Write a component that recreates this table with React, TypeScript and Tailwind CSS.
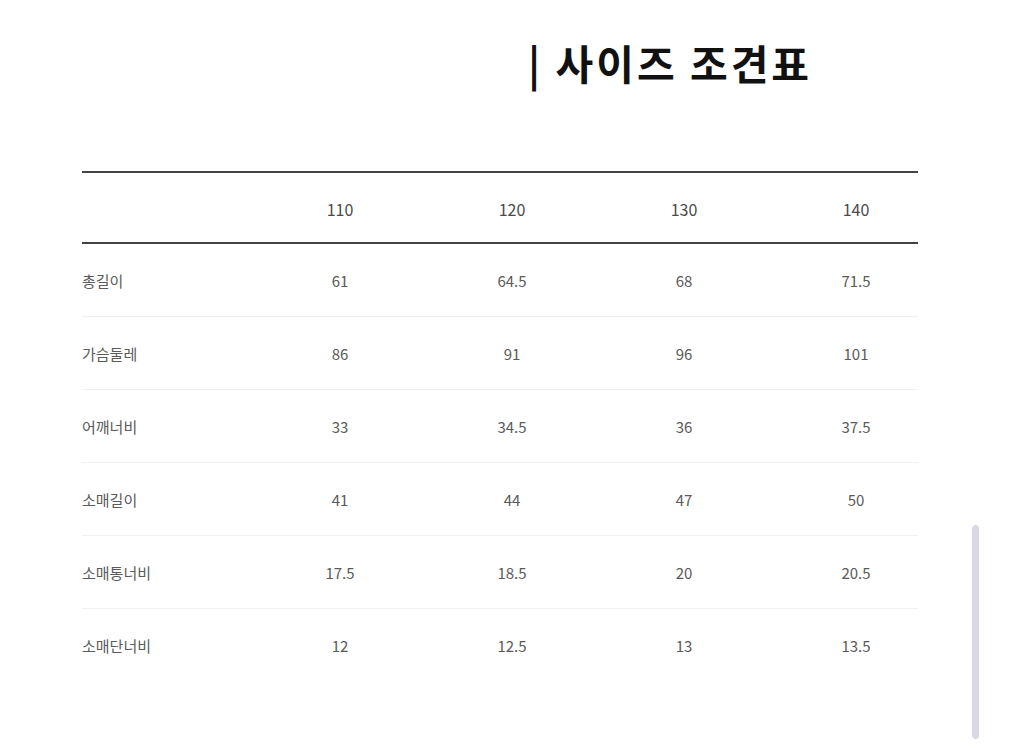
import React from "react";

const sizes = ["110", "120", "130", "140"];

const rows: { label: string; values: string[] }[] = [
  { label: "총길이", values: ["61", "64.5", "68", "71.5"] },
  { label: "가슴둘레", values: ["86", "91", "96", "101"] },
  { label: "어깨너비", values: ["33", "34.5", "36", "37.5"] },
  { label: "소매길이", values: ["41", "44", "47", "50"] },
  { label: "소매통너비", values: ["17.5", "18.5", "20", "20.5"] },
  { label: "소매단너비", values: ["12", "12.5", "13", "13.5"] },
];

export default function App() {
  return (
    <div
      className="relative w-[1009px] h-[750px] bg-white overflow-hidden"
      style={{ fontFamily: '"Noto Sans CJK KR", "Noto Sans", sans-serif' }}
    >
      <div className="pt-[32px] pl-[528px] h-[171px]">
        <h1 className="text-[41px] leading-[60px] font-bold text-[#111] tracking-[3px] whitespace-nowrap">
          | 사이즈 조견표
        </h1>
      </div>

      <div className="ml-[82px] w-[836px]">
        <div className="border-t-2 border-b-2 border-[#444] h-[73px] grid grid-cols-[172px_172px_172px_172px_172px] items-center">
          <div />
          {sizes.map((s) => (
            <div key={s} className="text-center text-[16px] text-[#4a4a4a] pt-[2px]">
              {s}
            </div>
          ))}
        </div>
        {rows.map((r, i) => (
          <div
            key={r.label}
            className={`h-[73px] grid grid-cols-[172px_172px_172px_172px_172px] items-center ${
              i < rows.length - 1 ? "border-b border-[#f1eff2]" : ""
            }`}
          >
            <div className="text-[15px] text-[#5a5a5a] pt-[2px]">{r.label}</div>
            {r.values.map((v, j) => (
              <div key={j} className="text-center text-[15px] text-[#5a5a5a] pt-[2px]">
                {v}
              </div>
            ))}
          </div>
        ))}
      </div>

      <div className="absolute left-[972px] top-[525px] w-[7px] h-[214px] rounded-full bg-[#d9d9e6]" />
    </div>
  );
}
